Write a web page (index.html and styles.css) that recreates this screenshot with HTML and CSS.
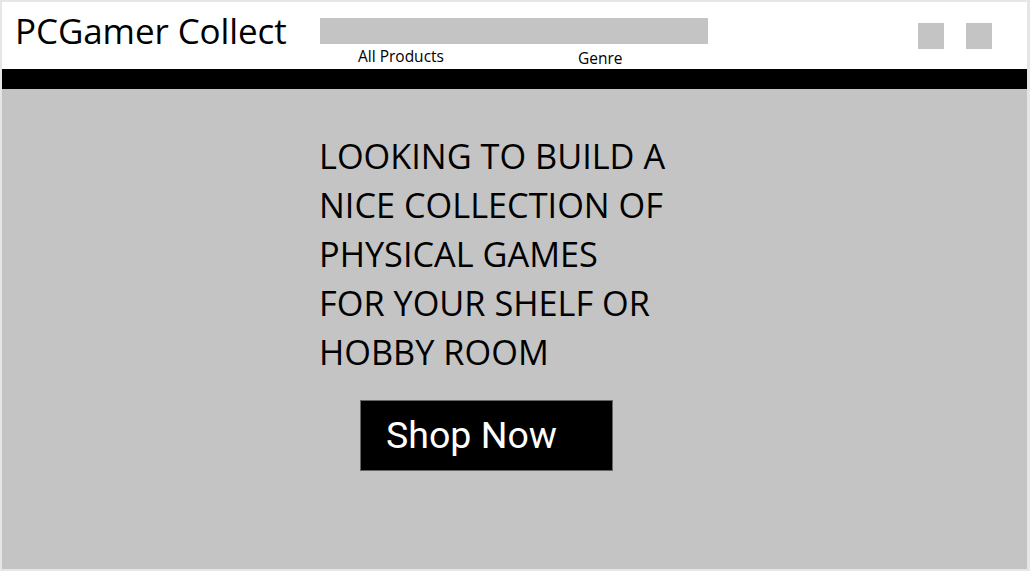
FILE: index.html
```html
<!DOCTYPE html>
<html lang="en">
<head>
<meta charset="utf-8">
<title>PCGamer Collect</title>
<link rel="stylesheet" href="styles.css">
</head>
<body>
<div class="frame">
  <header class="header">
    <div class="brand">PCGamer Collect</div>
    <div class="center">
      <div class="search"></div>
      <nav class="nav">
        <a class="nav-link nav-all">All Products</a>
        <a class="nav-link nav-genre">Genre</a>
      </nav>
    </div>
    <div class="icons">
      <span class="icon"></span>
      <span class="icon"></span>
    </div>
  </header>
  <div class="bar"></div>
  <main class="hero">
    <h1 class="hero-title">LOOKING TO BUILD A<br>NICE COLLECTION OF<br>PHYSICAL GAMES<br>FOR YOUR SHELF OR<br>HOBBY ROOM</h1>
    <a class="shop-btn">Shop Now</a>
  </main>
</div>
</body>
</html>
```
FILE: styles.css
```css
html, body {
  margin: 0;
  padding: 0;
  background: #e6e6e6;
}

.frame {
  width: 1025px;
  height: 567px;
  margin: 2px 3px 2px 2px;
  display: flex;
  flex-direction: column;
  font-family: "Open Sans", "Liberation Sans", sans-serif;
  color: #000;
}

.header {
  height: 67px;
  background: #fff;
  display: flex;
  align-items: flex-start;
  flex: none;
}

.brand {
  width: 304px;
  padding-left: 13px;
  box-sizing: border-box;
  font-size: 35px;
  line-height: 44px;
  margin-top: 7px;
  letter-spacing: -0.1px;
  white-space: nowrap;
}

.center {
  width: 388px;
  margin-left: 14px;
  margin-top: 16px;
  display: flex;
  flex-direction: column;
}

.search {
  height: 26px;
  background: #c4c4c4;
}

.nav {
  display: flex;
  font-size: 15.5px;
  line-height: 20px;
  margin-top: 2px;
}

.nav-link {
  color: #000;
  text-decoration: none;
  white-space: nowrap;
}

.nav-all {
  margin-left: 38px;
}

.nav-genre {
  margin-left: 134px;
  margin-top: 2px;
}

.icons {
  margin-left: auto;
  margin-right: 35px;
  margin-top: 21px;
  display: flex;
  gap: 22px;
}

.icon {
  width: 26px;
  height: 26px;
  background: #c4c4c4;
  display: block;
}

.bar {
  height: 20px;
  background: #000;
  flex: none;
}

.hero {
  flex: 1;
  background: #c4c4c4;
  padding: 42px 0 0 317px;
  display: flex;
  flex-direction: column;
  align-items: flex-start;
}

.hero-title {
  margin: 0;
  font-weight: 400;
  font-size: 34.3px;
  line-height: 49px;
  letter-spacing: 0;
  white-space: nowrap;
}

.shop-btn {
  margin: 24px 0 0 41px;
  width: 253px;
  height: 71px;
  box-sizing: border-box;
  background: #000;
  border: 1px solid #666;
  color: #fff;
  font-family: Roboto, "Liberation Sans", sans-serif;
  font-size: 37.5px;
  line-height: 69px;
  padding-left: 25px;
  text-decoration: none;
}
```
